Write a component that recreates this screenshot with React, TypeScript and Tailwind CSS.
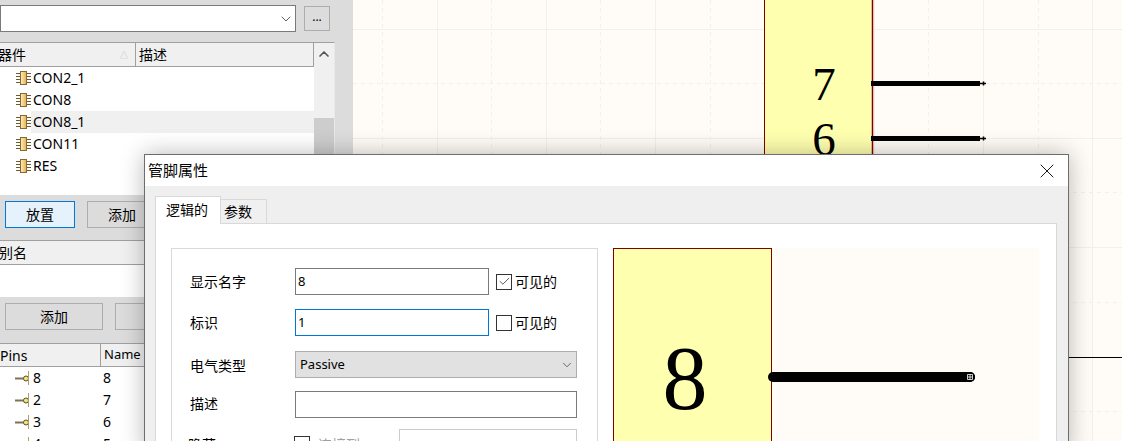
import { ChevronDown, ChevronUp, Check, X } from 'lucide-react';

const font = { fontFamily: '"Noto Sans", "Noto Sans CJK SC", sans-serif' };

function ChipIcon() {
  return (
    <svg width="15" height="14" viewBox="0 0 15 14" className="shrink-0">
      <defs>
        <linearGradient id="chip" x1="0" x2="1" y1="0" y2="0">
          <stop offset="0" stopColor="#fdf0b8" />
          <stop offset="1" stopColor="#e8b050" />
        </linearGradient>
      </defs>
      <path d="M0 2.5h4M0 5.5h4M0 8.5h4M0 11.5h4M11 2.5h4M11 5.5h4M11 8.5h4M11 11.5h4" stroke="#6e5a2c" strokeWidth="1" />
      <rect x="4.5" y="0.5" width="6" height="13" fill="url(#chip)" stroke="#86683a" />
    </svg>
  );
}

function PinIcon() {
  return (
    <svg width="15" height="14" viewBox="0 0 15 14" className="shrink-0">
      <path d="M0 7.5h9" stroke="#7d7350" strokeWidth="2" />
      <circle cx="11" cy="7.5" r="2.5" fill="#f5e27a" stroke="#5a5030" />
      <path d="M13.5 0v14" stroke="#b09c68" strokeWidth="1" />
    </svg>
  );
}

function PartRow({ name, selected }: { name: string; selected?: boolean }) {
  return (
    <div className="flex h-[22px] items-center pl-4 text-[14px] text-black">
      <ChipIcon />
      <div className={`flex h-full flex-1 items-center pb-[2px] pl-[2px] ${selected ? 'bg-[#f0f0f0]' : ''}`}>{name}</div>
    </div>
  );
}

function PinRow({ num, name }: { num: string; name: string }) {
  return (
    <div className="flex h-[22px] items-center pl-[15px] text-[14px] text-black">
      <PinIcon />
      <span className="mb-[2px] ml-[3px] w-[70px]">{num}</span>
      <span className="mb-[2px]">{name}</span>
    </div>
  );
}

function VisibleCheck({ checked }: { checked?: boolean }) {
  return (
    <div className="ml-[7px] flex items-center text-[14px] text-black">
      <div className="flex h-4 w-4 items-center justify-center border border-[#333] bg-white">
        {checked && <Check size={13} strokeWidth={1.5} className="text-[#333]" />}
      </div>
      <span className="ml-[3px]">可见的</span>
    </div>
  );
}

function Canvas() {
  const xs = [382, 437, 491, 546, 600, 655, 710, 764, 819, 874, 928, 983, 1038, 1092];
  const ys = [29, 83, 138, 192, 247, 302, 357, 411];
  return (
    <svg className="h-full w-full" viewBox="353 0 769 441">
      {xs.map((x, i) => (
        <line key={x} x1={x + 0.5} x2={x + 0.5} y1="0" y2="441" stroke="#f3f0ea" strokeDasharray={i % 2 === 0 ? '4 4' : undefined} />
      ))}
      {ys.map((y, i) => (
        <line key={y} x1="353" x2="1122" y1={y + 0.5} y2={y + 0.5} stroke="#f3f0ea" strokeDasharray={i % 2 === 1 ? '4 4' : undefined} />
      ))}
      <rect x="764.5" y="-5" width="108" height="300" fill="#ffffb0" stroke="#800000" />
      <line x1="872.5" x2="872.5" y1="0" y2="200" stroke="#800000" strokeWidth="1.5" />
      <text x="824" y="100" textAnchor="middle" fontSize="47" fontFamily="Liberation Serif">7</text>
      <text x="824" y="155" textAnchor="middle" fontSize="47" fontFamily="Liberation Serif">6</text>
      <path d="M871 83.5h109M871 138.5h109" stroke="#000" strokeWidth="5" />
      <path d="M980 83.5h6M980 138.5h6M983.5 81.5v4M983.5 136.5v4" stroke="#000" strokeWidth="1.5" />
      <line x1="1060" x2="1122" y1="357.5" y2="357.5" stroke="#000" />
    </svg>
  );
}

function Preview() {
  return (
    <svg width="426" height="193" viewBox="613 248 426 193" className="ml-[15px] shrink-0">
      <rect x="613" y="248" width="426" height="193" fill="#fffcf8" />
      <rect x="613.5" y="248.5" width="158" height="200" fill="#ffffb0" stroke="#800000" />
      <text x="685" y="409" textAnchor="middle" fontSize="90" fontFamily="Liberation Serif">8</text>
      <path d="M773 377h197" stroke="#000" strokeWidth="10" strokeLinecap="round" />
      <circle cx="970" cy="377" r="5" fill="#000" />
      <path d="M967.5 374.5h5v5h-5zM970 374.5v5M967.5 377h5" fill="none" stroke="#fff" strokeWidth="0.8" />
    </svg>
  );
}

function Dialog() {
  return (
    <div className="absolute left-[144px] top-[154px] h-[300px] w-[925px] border border-[#6d6d6d] bg-[#efefef] shadow-[0_0_22px_rgba(0,0,0,0.28)]">
      <div className="flex h-[31px] items-center justify-between bg-white pl-[3px] pr-[9px] text-[15px] text-black">
        <span>管脚属性</span>
        <X size={24} strokeWidth={0.9} className="text-black" />
      </div>
      <div className="ml-[10px] mt-[10px] flex h-[27px] items-end text-[14px] text-black">
        <div className="-mb-px z-10 flex h-[28px] w-[66px] items-center border border-b-0 border-[#d9d9d9] bg-white pb-[3px] pl-[10px]">逻辑的</div>
        <div className="flex h-[24px] w-[46px] items-center border border-b-0 border-l-0 border-[#d9d9d9] bg-[#f0f0f0] pb-px pl-[3px]">参数</div>
      </div>
      <div className="ml-[10px] flex h-[300px] w-[902px] border border-[#d9d9d9] bg-white pl-[15px] pt-[24px]">
        <div className="h-[260px] w-[427px] shrink-0 border border-[#d9d9d9] pl-[18px] pt-[19px] text-[14px] text-black">
          <div className="flex h-[27px] items-center">
            <span className="w-[105px]">显示名字</span>
            <div className="flex h-[27px] w-[194px] items-center border border-[#7a7a7a] pl-[2px] text-[13px]">8</div>
            <VisibleCheck checked />
          </div>
          <div className="mt-[14px] flex h-[27px] items-center">
            <span className="w-[105px]">标识</span>
            <div className="flex h-[27px] w-[194px] items-center border border-[#0078d7] pl-[2px] text-[13px]">1</div>
            <VisibleCheck />
          </div>
          <div className="mt-[15px] flex h-[27px] items-center">
            <span className="mt-[2px] w-[105px]">电气类型</span>
            <div className="flex h-[27px] w-[282px] items-center justify-between border border-[#adadad] bg-[#e1e1e1] pl-[4px] pr-[2px] text-[13px]">
              Passive
              <ChevronDown size={14} strokeWidth={1.2} className="text-[#333]" />
            </div>
          </div>
          <div className="mt-[13px] flex h-[27px] items-center">
            <span className="mb-[2px] w-[105px]">描述</span>
            <div className="h-[27px] w-[282px] border border-[#7a7a7a]" />
          </div>
          <div className="mt-[11px] flex h-[27px] items-center">
            <span className="-ml-[2px] w-[106px] pt-[4px]">隐藏</span>
            <div className="mt-[2px] h-4 w-4 border border-[#333]" />
            <span className="ml-[8px] w-[81px] pt-[4px] text-[#a0a0a0]">连接到</span>
            <div className="h-[27px] w-[178px] border border-[#cccccc]" />
          </div>
        </div>
        <Preview />
      </div>
    </div>
  );
}

export default function App() {
  return (
    <div className="relative flex h-[441px] w-[1122px] overflow-hidden bg-[#fffbf6]" style={font}>
      <div className="h-full w-[353px] shrink-0 bg-[#dcdcdc] pt-[5px]">
        <div className="flex items-center">
          <div className="flex h-[27px] w-[296px] items-center justify-end border border-[#7a7a7a] bg-white pr-[1px]">
            <ChevronDown size={16} strokeWidth={1.2} className="text-[#333]" />
          </div>
          <div className="ml-[8px] flex h-[25px] w-[26px] items-center justify-center border border-[#adadad] pb-[4px] text-[12px] text-black">...</div>
        </div>

        <div className="mt-[10px] flex h-[153px] w-[335px] border-t border-r border-[#a0a0a0] border-r-[#e8e8e8] bg-white">
          <div className="flex-1">
            <div className="flex h-[24px] items-center border-b border-r border-[#a0a0a0] bg-[#f0f0f0] text-[14px] text-black">
              <div className="flex h-full w-[136px] items-center justify-between border-r border-[#a0a0a0] pr-[7px]">
                <span className="-ml-[2px]">器件</span>
                <span className="text-[8px] text-[#bbbbbb]">△</span>
              </div>
              <span className="pl-[3px]">描述</span>
            </div>
            <PartRow name="CON2_1" />
            <PartRow name="CON8" />
            <PartRow name="CON8_1" selected />
            <PartRow name="CON11" />
            <PartRow name="RES" />
          </div>
          <div className="w-[20px] bg-[#f0f0f0]">
            <div className="flex h-[21px] items-center justify-center">
              <ChevronUp size={16} strokeWidth={2.5} className="text-[#555]" />
            </div>
            <div className="mt-[54px] h-[60px] bg-[#cdcdcd]" />
          </div>
        </div>

        <div className="mt-[6px] flex gap-[12px] pl-[5px] text-[14px] text-black">
          <div className="flex h-[27px] w-[70px] items-center justify-center border border-[#0078d7] bg-[#e5f1fb]">放置</div>
          <div className="flex h-[27px] w-[70px] items-center justify-center border border-[#adadad]">添加</div>
        </div>

        <div className="mt-[12px] flex h-[25px] items-center border-y border-[#a0a0a0] bg-[#f0f0f0] text-[14px] text-black">
          <span className="-ml-px">别名</span>
        </div>
        <div className="h-[32px] bg-white" />

        <div className="mt-[6px] flex gap-[12px] pl-[5px] text-[14px] text-black">
          <div className="flex h-[27px] w-[98px] items-center justify-center border border-[#adadad]">添加</div>
          <div className="flex h-[27px] w-[98px] items-center justify-center border border-[#adadad]" />
        </div>

        <div className="mt-[13px] flex h-[24px] items-center border-y border-[#a0a0a0] bg-[#f0f0f0] text-[14px] text-black">
          <div className="flex h-full w-[101px] items-center border-r border-[#a0a0a0]">Pins</div>
          <span className="pl-[3px] text-[13px]">Name</span>
        </div>
        <div className="bg-white">
          <PinRow num="8" name="8" />
          <PinRow num="2" name="7" />
          <PinRow num="3" name="6" />
          <PinRow num="4" name="5" />
        </div>
      </div>
      <div className="flex-1">
        <Canvas />
      </div>
      <Dialog />
    </div>
  );
}
